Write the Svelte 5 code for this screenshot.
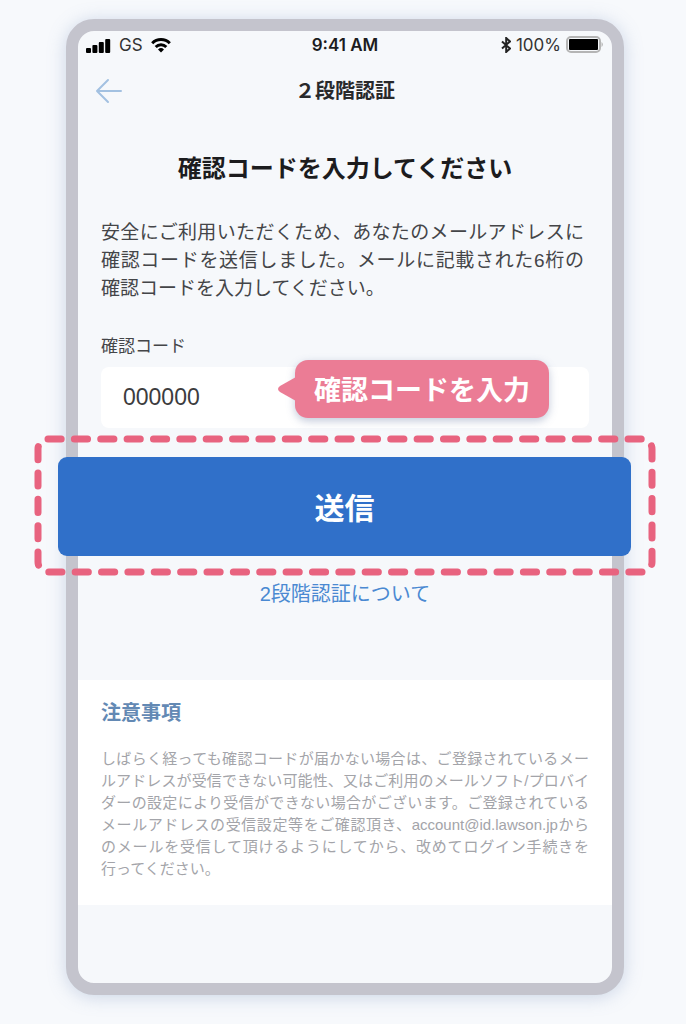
<script lang="ts">
  let code = $state('000000');

  const bars = [5, 8, 11, 14];
</script>

<div class="page">
  <main class="phone">
    <div class="status-bar">
      <div class="status-left">
        <svg class="signal" viewBox="0 0 25 15" aria-hidden="true">
          {#each bars as height, i}
            <rect x={i * 6.4} y={15 - height} width="5" {height} rx="1" />
          {/each}
        </svg>
        <span>GS</span>
        <svg class="wifi" viewBox="0 0 20 15" aria-hidden="true">
          <path d="M1.2 5.2a12.4 12.4 0 0 1 17.6 0" />
          <path d="M4.7 9a7.5 7.5 0 0 1 10.6 0" />
          <path class="dot" d="M10 14.6 7 11.5a4.3 4.3 0 0 1 6 0z" />
        </svg>
      </div>
      <span class="time">9:41 AM</span>
      <div class="status-right">
        <svg class="bluetooth" viewBox="0 0 10 16" aria-hidden="true">
          <path d="M1 4.5 9 11.5 5.2 15V1L9 4.5 1 11.5" />
        </svg>
        <span>100%</span>
        <svg class="battery" viewBox="0 0 38 18" aria-hidden="true">
          <rect class="shell" x="1" y="1" width="33" height="15" rx="4" />
          <rect x="3" y="3" width="29" height="11" rx="1" />
          <path class="cap" d="M35.5 6a3 3 0 0 1 0 5z" />
        </svg>
      </div>
    </div>

    <header class="nav">
      <button class="back" type="button" aria-label="戻る">
        <svg viewBox="0 0 28 26" aria-hidden="true">
          <path d="M26 13H2M13 2 2 13l11 11" />
        </svg>
      </button>
      <h1>２段階認証</h1>
    </header>

    <form class="verify" onsubmit={(e) => e.preventDefault()}>
      <h2>確認コードを入力してください</h2>
      <p class="lead">
        安全にご利用いただくため、あなたのメールアドレスに確認コードを送信しました。メールに記載された6桁の確認コードを入力してください。
      </p>

      <label for="code">確認コード</label>
      <div class="field">
        <input id="code" type="text" inputmode="numeric" maxlength="6" bind:value={code} />
        <div class="tooltip">
          <svg class="pointer" viewBox="0 0 18 24" aria-hidden="true">
            <path d="M18 0 2 9q-4 3 0 6l16 9z" />
          </svg>
          確認コードを入力
        </div>
      </div>

      <div class="submit">
        <button type="submit">送信</button>
        <svg class="highlight" aria-hidden="true">
          <rect x="4" y="4" rx="10" pathLength="560" />
        </svg>
      </div>

      <a class="about" href="#about">2段階認証について</a>
    </form>

    <section class="notes">
      <h3>注意事項</h3>
      <p>
        しばらく経っても確認コードが届かない場合は、ご登録されているメールアドレスが受信できない可能性、又はご利用のメールソフト/プロバイダーの設定により受信ができない場合がございます。ご登録されているメールアドレスの受信設定等をご確認頂き、account@id.lawson.jpからのメールを受信して頂けるようにしてから、改めてログイン手続きを<span class="keep">行ってください。</span>
      </p>
    </section>
  </main>
</div>

<style>
  :global(body) {
    margin: 0;
    background: #f7f9fc;
  }

  .page {
    box-sizing: border-box;
    padding: 19px 62px 29px 66px;
    font-family: 'Liberation Sans', 'Noto Sans CJK JP', sans-serif;
    color: #444548;
    overflow: hidden;
  }

  .phone {
    border: 12px solid #c4c4cd;
    border-radius: 28px;
    padding-bottom: 78px;
    background: #f6f8fb;
    box-shadow: 0 2px 18px rgba(120, 145, 190, 0.35);
  }

  h1,
  h2,
  h3,
  p {
    margin: 0;
  }

  .status-bar {
    display: grid;
    grid-template-columns: 1fr auto 1fr;
    align-items: center;
    height: 28px;
    padding: 0 8px;
    font-family: Inter, sans-serif;
    font-size: 17px;
    color: #333;
  }

  .status-left,
  .status-right {
    display: flex;
    align-items: center;
  }

  .status-left {
    gap: 8px;
  }

  .status-right {
    justify-content: flex-end;
    gap: 5px;
  }

  .time {
    font-weight: 600;
    color: #1c1c1e;
  }

  .signal {
    width: 25px;
    height: 15px;
  }

  .wifi {
    width: 20px;
    height: 15px;
    fill: none;
    stroke: #000;
    stroke-width: 3;
  }

  .wifi .dot {
    fill: #000;
    stroke: none;
  }

  .bluetooth {
    width: 10px;
    height: 16px;
    fill: none;
    stroke: #222;
    stroke-width: 2;
  }

  .battery {
    width: 38px;
    height: 18px;
  }

  .battery .shell {
    fill: none;
    stroke: #b5b5b5;
    stroke-width: 2;
  }

  .battery .cap {
    fill: #b5b5b5;
  }

  .nav {
    display: grid;
    grid-template-columns: 1fr auto 1fr;
    align-items: center;
    height: 64px;
    padding: 0 17px;
  }

  .back {
    display: flex;
    justify-self: start;
    padding: 0;
    border: 0;
    background: none;
    cursor: pointer;
  }

  .back svg {
    width: 28px;
    height: 26px;
    fill: none;
    stroke: #a3c1e1;
    stroke-width: 2;
    stroke-linecap: round;
    stroke-linejoin: round;
  }

  h1 {
    font-size: 20px;
    line-height: 28px;
    font-weight: 700;
    color: #29292b;
  }

  .verify {
    display: flex;
    flex-direction: column;
    padding: 28px 23px 72px;
  }

  h2 {
    font-size: 24px;
    line-height: 36px;
    font-weight: 700;
    text-align: center;
    color: #1c1c1e;
  }

  .lead {
    margin: 32px 5px 0 0;
    font-size: 19px;
    line-height: 28px;
    text-align: justify;
  }

  label {
    margin-top: 32px;
    font-size: 17px;
    line-height: 24px;
  }

  .field {
    position: relative;
    margin-top: 8px;
  }

  input {
    display: block;
    box-sizing: border-box;
    width: 100%;
    height: 61px;
    padding: 0 22px;
    border: 0;
    border-radius: 8px;
    background: #fff;
    font-family: inherit;
    font-size: 23px;
    color: #3c3c3e;
  }

  .tooltip {
    position: absolute;
    top: -7px;
    right: 40px;
    padding: 4px 19px 0;
    border-radius: 13px;
    background: #eb7c95;
    box-shadow: 0 3px 8px rgba(80, 100, 150, 0.35);
    font-size: 27px;
    line-height: 54px;
    font-weight: 700;
    white-space: nowrap;
    color: #fff;
  }

  .pointer {
    position: absolute;
    top: 17px;
    left: -17px;
    width: 18px;
    height: 24px;
    fill: #eb7c95;
  }

  .submit {
    position: relative;
    margin: 29px -42px 0 -43px;
  }

  .submit button {
    display: block;
    width: 100%;
    height: 99px;
    padding: 0 0 2px;
    border: 0;
    border-radius: 9px;
    background: #3070c9;
    font-family: inherit;
    font-size: 30px;
    font-weight: 700;
    color: #fff;
    cursor: pointer;
  }

  .highlight {
    position: absolute;
    top: -22px;
    left: -24px;
    width: calc(100% + 49px);
    height: calc(100% + 42px);
    pointer-events: none;
  }

  .highlight rect {
    width: calc(100% - 8px);
    height: calc(100% - 8px);
    fill: none;
    stroke: #e8637f;
    stroke-width: 7;
    stroke-linecap: round;
    stroke-dasharray: 5 5;
  }

  .about {
    align-self: center;
    margin-top: 24px;
    font-size: 20px;
    line-height: 28px;
    color: #4a89d2;
    text-decoration: none;
  }

  .notes {
    padding: 19px 23px 25px;
    background: #fff;
  }

  h3 {
    font-size: 20px;
    line-height: 28px;
    font-weight: 700;
    color: #6389b4;
  }

  .notes p {
    margin-top: 21px;
    font-size: 15px;
    line-height: 22px;
    text-align: justify;
    color: #a3a4a9;
  }

  .keep {
    white-space: nowrap;
  }
</style>
